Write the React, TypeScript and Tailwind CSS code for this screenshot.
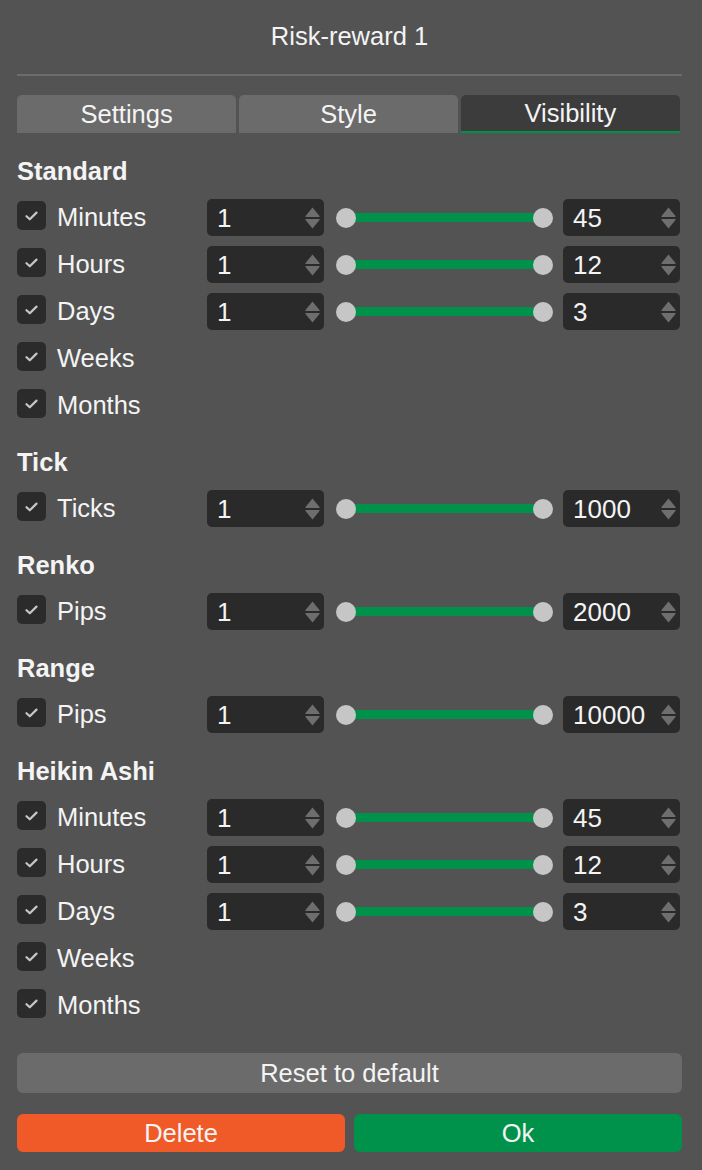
import React from "react";

type Row = { label: string; min?: string; max?: string };
type Section = { title: string; rows: Row[] };

const sections: Section[] = [
  {
    title: "Standard",
    rows: [
      { label: "Minutes", min: "1", max: "45" },
      { label: "Hours", min: "1", max: "12" },
      { label: "Days", min: "1", max: "3" },
      { label: "Weeks" },
      { label: "Months" },
    ],
  },
  { title: "Tick", rows: [{ label: "Ticks", min: "1", max: "1000" }] },
  { title: "Renko", rows: [{ label: "Pips", min: "1", max: "2000" }] },
  { title: "Range", rows: [{ label: "Pips", min: "1", max: "10000" }] },
  {
    title: "Heikin Ashi",
    rows: [
      { label: "Minutes", min: "1", max: "45" },
      { label: "Hours", min: "1", max: "12" },
      { label: "Days", min: "1", max: "3" },
      { label: "Weeks" },
      { label: "Months" },
    ],
  },
];

function Checkbox() {
  return (
    <div className="w-[29px] h-[29px] mb-[4px] rounded-[5px] bg-[#2b2b2b] flex items-center justify-center shrink-0">
      <svg width="13" height="10" viewBox="0 0 13 10" fill="none">
        <path d="M1.5 5.2 L4.8 8.3 L11.5 1.6" stroke="#c6c6c6" strokeWidth="2.2" strokeLinecap="round" strokeLinejoin="round" />
      </svg>
    </div>
  );
}

function NumberBox({ value }: { value: string }) {
  return (
    <div className="w-[117px] h-[37px] rounded-[5px] bg-[#2a2a2a] flex items-center justify-between pl-[10px] pr-[4px] shrink-0">
      <span className="text-[26px] leading-none text-[#f4f4f4]">{value}</span>
      <svg width="15" height="22" viewBox="0 0 15 22">
        <path d="M7.5 0.5 L14.5 9 L14.5 10 L0.5 10 L0.5 9 Z" fill="#6e6e6e" />
        <path d="M0.5 12 L14.5 12 L14.5 13 L7.5 21.5 L0.5 13 Z" fill="#6e6e6e" />
      </svg>
    </div>
  );
}

function Slider() {
  return (
    <div className="flex-1 ml-[12px] mr-[10px] relative h-[20px] flex items-center">
      <div className="absolute left-[10px] right-[10px] h-[9px] bg-[#00924a]" />
      <div className="absolute left-0 w-[20px] h-[20px] rounded-full bg-[#c6c6c6]" />
      <div className="absolute right-0 w-[20px] h-[20px] rounded-full bg-[#c6c6c6]" />
    </div>
  );
}

function RowView({ row }: { row: Row }) {
  return (
    <div className="flex items-center h-[37px] w-[663px]">
      <div className="w-[190px] flex items-center gap-[11px] shrink-0">
        <Checkbox />
        <span className="text-[25.5px] leading-none text-[#f4f4f4]">{row.label}</span>
      </div>
      {row.min !== undefined && (
        <>
          <NumberBox value={row.min} />
          <Slider />
          <NumberBox value={row.max!} />
        </>
      )}
    </div>
  );
}

export default function App() {
  return (
    <div
      className="w-[702px] h-[1170px] bg-[#535353] text-white pl-[17px] pr-[20px] flex flex-col"
      style={{ fontFamily: '"Liberation Sans", Arial, sans-serif' }}
    >
      <div className="h-[74px] flex items-center justify-center text-[25.5px] text-[#f4f4f4] pb-[2px]">
        Risk-reward 1
      </div>
      <div className="h-[2px] bg-[#6c6c6c]" />
      <div className="mt-[19px] flex gap-[2.5px] w-[663px]">
        <div className="flex-1 h-[38px] rounded-t-[5px] bg-[#6b6b6b] flex items-center justify-center text-[25.5px] text-[#f4f4f4]">
          Settings
        </div>
        <div className="flex-1 h-[38px] rounded-t-[5px] bg-[#6b6b6b] flex items-center justify-center text-[25.5px] text-[#f4f4f4]">
          Style
        </div>
        <div className="flex-1 h-[38px] rounded-t-[5px] bg-[#3c3c3c] border-b-2 border-[#00924a] flex items-center justify-center text-[25.5px] text-[#f4f4f4]">
          Visibility
        </div>
      </div>
      <div className="mt-[23px] flex flex-col gap-[23px]">
        {sections.map((s, i) => (
          <div key={i} className="flex flex-col">
            <div className="h-[30px] flex items-center font-bold text-[25.5px] text-[#f4f4f4] mb-[13px]">
              {s.title}
            </div>
            <div className="flex flex-col gap-[10px]">
              {s.rows.map((r, j) => (
                <RowView key={j} row={r} />
              ))}
            </div>
          </div>
        ))}
      </div>
      <div className="mt-[29px] h-[40px] rounded-[6px] bg-[#6b6b6b] flex items-center justify-center text-[25.5px] text-[#f4f4f4]">
        Reset to default
      </div>
      <div className="mt-[21px] flex gap-[9px]">
        <div className="flex-1 h-[38px] rounded-[6px] bg-[#f05a28] flex items-center justify-center text-[25.5px] text-[#f4f4f4]">
          Delete
        </div>
        <div className="flex-1 h-[38px] rounded-[6px] bg-[#00924a] flex items-center justify-center text-[25.5px] text-[#f4f4f4]">
          Ok
        </div>
      </div>
    </div>
  );
}
